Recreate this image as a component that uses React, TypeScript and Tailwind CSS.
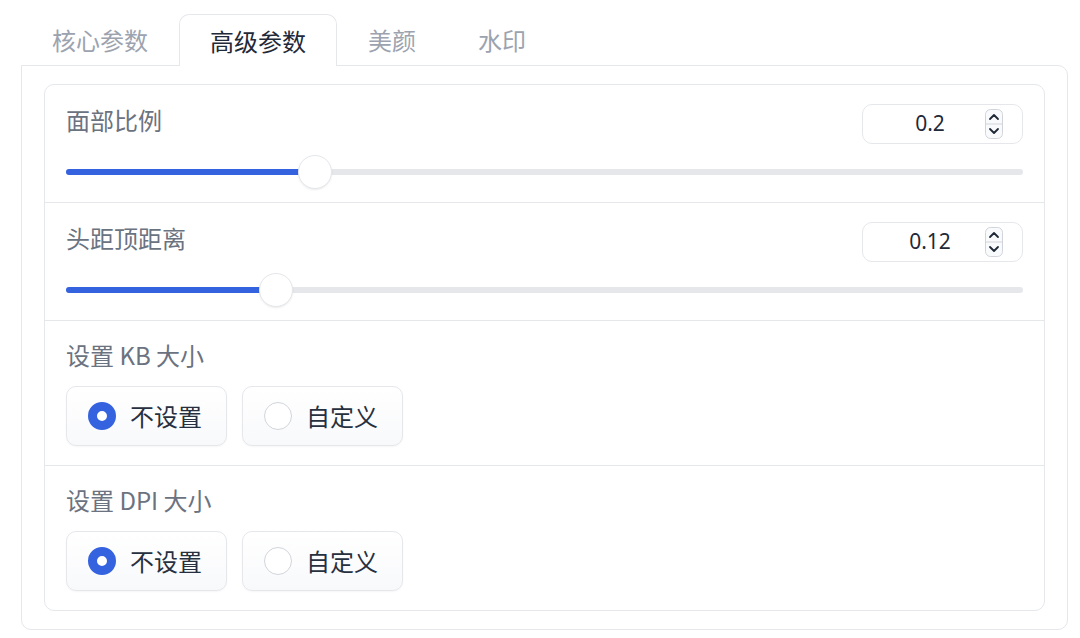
import { useState } from 'react'

const FONT = { fontFamily: '"Noto Sans CJK SC", "Noto Sans", sans-serif' }

const tabs = ['核心参数', '高级参数', '美颜', '水印']

const Spinner = () => (
  <svg width="18" height="30" viewBox="0 0 18 30" className="block">
    <rect x="0.5" y="0.5" width="17" height="29" rx="5" fill="#f9fafb" stroke="#d1d5db" />
    <line x1="1" y1="15" x2="17" y2="15" stroke="#d1d5db" />
    <path d="M5 10 L9 6 L13 10" fill="none" stroke="#1f2937" strokeWidth="1.8" strokeLinecap="round" strokeLinejoin="round" />
    <path d="M5 20 L9 24 L13 20" fill="none" stroke="#1f2937" strokeWidth="1.8" strokeLinecap="round" strokeLinejoin="round" />
  </svg>
)

const SliderRow = ({ label, value, pct }: { label: string; value: string; pct: number }) => (
  <div className="border-b border-[#e5e7eb] px-[21px] pt-[19px] pb-[13px]">
    <div className="flex h-[40px] items-start justify-between">
      <span className="text-[24px] leading-[32px] text-[#6b7280]">{label}</span>
      <div className="relative h-[40px] w-[161px] rounded-[10px] border border-[#e5e7eb] bg-white">
        <span
          className="flex h-full w-[134px] items-center justify-center text-[21px] text-[#1f2937]"
          style={{ fontFamily: '"Noto Sans", sans-serif' }}
        >
          {value}
        </span>
        <div className="absolute top-[4px] right-[19px]">
          <Spinner />
        </div>
      </div>
    </div>
    <div className="relative mt-[11px] flex h-[34px] items-center">
      <div className="h-[6px] w-full rounded-full bg-[#e5e7eb]">
        <div className="h-full rounded-full bg-[#3563e0]" style={{ width: `${pct}%` }} />
      </div>
      <div
        className="absolute top-0 h-[34px] w-[34px] -translate-x-1/2 rounded-full border border-[#e5e7eb] bg-white shadow-[0_1px_2px_rgba(0,0,0,0.08)]"
        style={{ left: `${pct}%` }}
      />
    </div>
  </div>
)

const RadioRow = ({ label, last }: { label: string; last?: boolean }) => {
  const [choice, setChoice] = useState('不设置')
  return (
    <div className={`px-[21px] pt-[18px] pb-[19px] ${last ? '' : 'border-b border-[#e5e7eb]'}`}>
      <div className="text-[24px] leading-[32px] text-[#6b7280]">{label}</div>
      <div className="mt-[15px] flex gap-[15px]">
        {['不设置', '自定义'].map((opt) => {
          const on = choice === opt
          return (
            <button
              key={opt}
              onClick={() => setChoice(opt)}
              className="flex h-[60px] w-[161px] items-center gap-[14px] rounded-[10px] border border-[#e5e7eb] bg-gradient-to-b from-white to-[#f8f9fb] pl-[21px] shadow-[0_1px_2px_rgba(0,0,0,0.04)]"
            >
              {on ? (
                <span className="h-[28px] w-[28px] rounded-full border-[9px] border-[#3563e0] bg-white" />
              ) : (
                <span className="h-[28px] w-[28px] rounded-full border border-[#d1d5db] bg-white" />
              )}
              <span className="text-[24px] text-[#27303f]">{opt}</span>
            </button>
          )
        })}
      </div>
    </div>
  )
}

export default function App() {
  const [active, setActive] = useState(1)
  return (
    <div className="h-[638px] w-[1080px] overflow-hidden bg-white pt-[14px] pl-[21px]" style={FONT}>
      <div className="relative z-10 flex">
        {tabs.map((t, i) => (
          <button
            key={t}
            onClick={() => setActive(i)}
            className={`-mb-px h-[52px] px-[30px] text-[24px] leading-none ${
              i === active
                ? 'rounded-t-[10px] border border-b-0 border-[#e5e7eb] bg-white text-[#1f2937]'
                : 'border border-transparent text-[#9ca3af]'
            }`}
          >
            {t}
          </button>
        ))}
      </div>
      <div className="w-[1047px] rounded-tr-[10px] rounded-b-[10px] border border-[#e5e7eb] bg-white px-[22px] py-[18px]">
        <div className="overflow-hidden rounded-[10px] border border-[#e5e7eb]">
          <SliderRow label="面部比例" value="0.2" pct={26} />
          <SliderRow label="头距顶距离" value="0.12" pct={21.9} />
          <RadioRow label="设置 KB 大小" />
          <RadioRow label="设置 DPI 大小" last />
        </div>
      </div>
    </div>
  )
}
